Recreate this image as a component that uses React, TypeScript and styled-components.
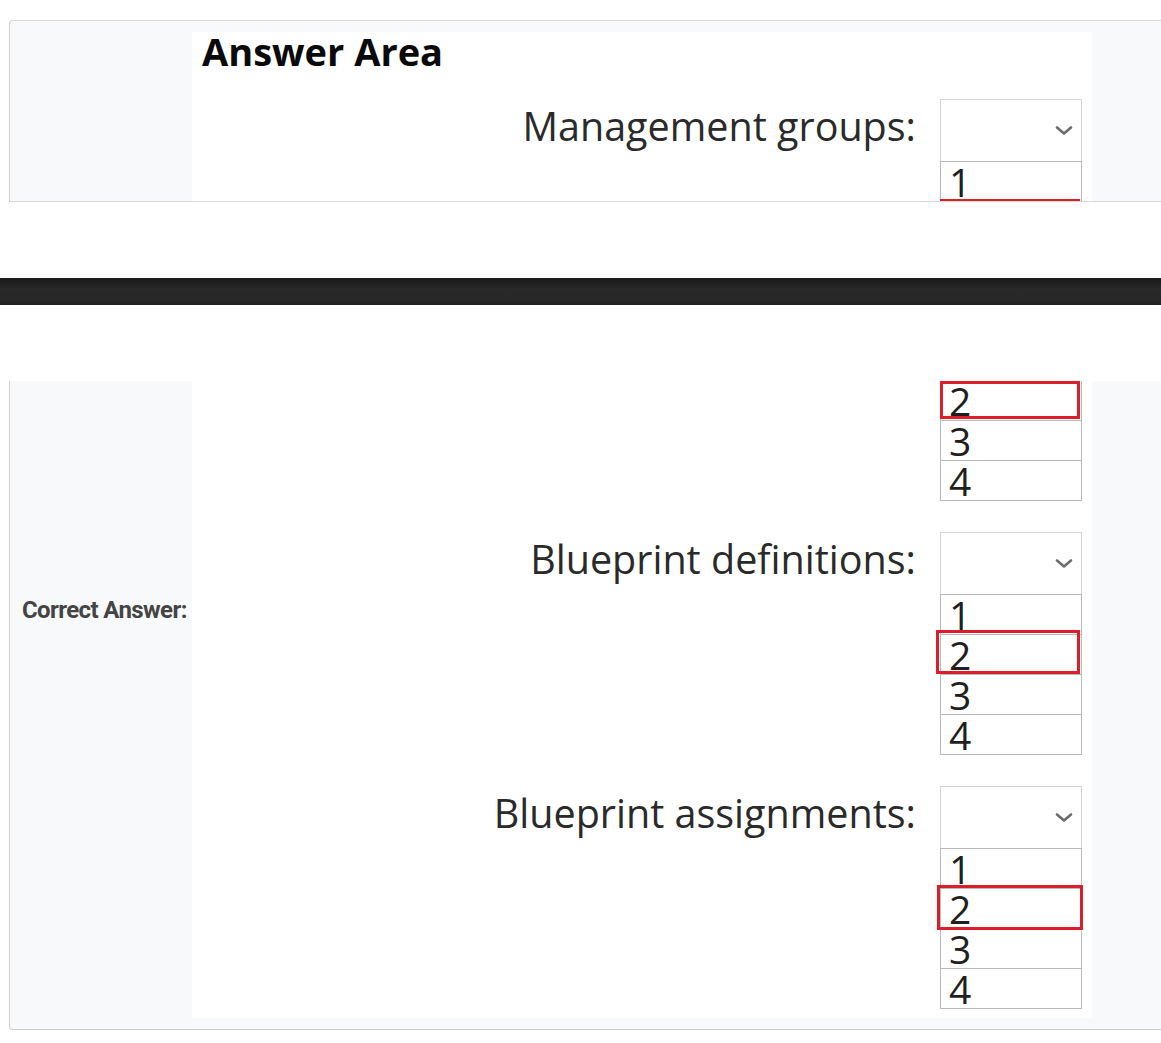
import React from "react";
import styled, { createGlobalStyle, css } from "styled-components";

const GlobalStyle = createGlobalStyle`
  html, body {
    margin: 0;
    padding: 0;
    background: #ffffff;
  }
  body {
    font-family: "Open Sans", "Liberation Sans", sans-serif;
    overflow-x: hidden;
  }
  * {
    box-sizing: border-box;
  }
`;

const Page = styled.main`
  display: flex;
  flex-direction: column;
  gap: 76px;
  padding-top: 20px;
`;

const Card = styled.section<{ $edge: "top" | "bottom" }>`
  display: flex;
  margin-left: 9px;
  background: #f8f9fa;
  border-left: 1px solid #cfcfcf;
  ${(p) =>
    p.$edge === "top"
      ? css`
          border-top: 1px solid #d8d8d8;
          border-bottom: 1px solid #d8d8d8;
          border-top-left-radius: 4px;
          padding-top: 11px;
        `
      : css`
          border-bottom: 1px solid #cdcdcd;
          border-bottom-left-radius: 4px;
          padding-bottom: 11px;
        `}
`;

const SideCell = styled.div<{ $top: number }>`
  width: 182px;
  flex: none;
  padding: ${(p) => p.$top}px 0 0 12px;
`;

const SideLabel = styled.div`
  font-family: Roboto, "Liberation Sans", sans-serif;
  font-weight: 700;
  font-size: 24px;
  line-height: 24px;
  letter-spacing: -0.6px;
  color: #444444;
  white-space: nowrap;
`;

const Panel = styled.div<{ $height: number }>`
  width: 900px;
  flex: none;
  height: ${(p) => p.$height}px;
  overflow: hidden;
  background: #ffffff;
  color: #262626;
`;

const Title = styled.h2`
  margin: 0 0 28px;
  padding-left: 10px;
  font-size: 38px;
  line-height: 39px;
  font-weight: 700;
  color: #0a0a0a;
  white-space: nowrap;
`;

const Questions = styled.div`
  display: flex;
  flex-direction: column;
  gap: 31px;
`;

const QuestionRow = styled.div`
  display: flex;
  justify-content: flex-end;
  align-items: flex-start;
  gap: 24px;
  padding-right: 10px;
`;

const Label = styled.div`
  font-size: 39.5px;
  line-height: 55px;
  color: #2a2a2a;
  white-space: nowrap;
`;

const Dropdown = styled.div`
  width: 142px;
  flex: none;
  display: flex;
  flex-direction: column;
`;

const SelectBox = styled.div`
  height: 62px;
  display: flex;
  align-items: center;
  justify-content: flex-end;
  padding-right: 8px;
  border: 1px solid #d6d6d6;
  border-bottom: none;
`;

const OptionList = styled.ul<{ $continued?: boolean }>`
  list-style: none;
  margin: 0;
  padding: 0;
  border: 1px solid #bababa;
  border-bottom: none;
  ${(p) =>
    p.$continued &&
    css`
      border-top: none;
    `}
`;

const Option = styled.li`
  position: relative;
  height: 40px;
  padding: 1px 0 0 8px;
  border-bottom: 1px solid #bababa;
  font-size: 39px;
  line-height: 38px;
  color: #1f1f1f;
`;

const Highlight = styled.span<{ $inset: string }>`
  position: absolute;
  inset: ${(p) => p.$inset};
  border: 3.5px solid #db1f2a;
  pointer-events: none;
`;

const DarkBar = styled.div`
  height: 27px;
  background: linear-gradient(#191919 0%, #292929 40%, #272727 80%, #202020 100%);
`;

const Chevron = () => (
  <svg width="18" height="11" viewBox="0 0 18 11" aria-hidden="true">
    <polyline
      points="2,2.5 9,8.5 16,2.5"
      fill="none"
      stroke="#6c6c6c"
      strokeWidth="2.6"
      strokeLinecap="round"
      strokeLinejoin="round"
    />
  </svg>
);

type Question = { label: string; selected: number; inset: string };

const laterQuestions: Question[] = [
  { label: "Blueprint definitions:", selected: 2, inset: "-5px 1px 0px -5px" },
  { label: "Blueprint assignments:", selected: 2, inset: "-4px -2px -2px -4px" },
];

const options = [1, 2, 3, 4];

const QuestionBlock = ({ q }: { q: Question }) => (
  <QuestionRow>
    <Label>{q.label}</Label>
    <Dropdown>
      <SelectBox>
        <Chevron />
      </SelectBox>
      <OptionList>
        {options.map((o) => (
          <Option key={o}>
            {o}
            {o === q.selected && <Highlight $inset={q.inset} />}
          </Option>
        ))}
      </OptionList>
    </Dropdown>
  </QuestionRow>
);

export default function App() {
  return (
    <>
      <GlobalStyle />
      <Page>
        <Card $edge="top">
          <SideCell $top={0} />
          <Panel $height={169}>
            <Title>Answer Area</Title>
            <QuestionRow>
              <Label>Management groups:</Label>
              <Dropdown>
                <SelectBox>
                  <Chevron />
                </SelectBox>
                <OptionList>
                  <Option>1</Option>
                  <Option aria-hidden="true">
                    <Highlight $inset="-3px 1px 1px -1px" />
                  </Option>
                </OptionList>
              </Dropdown>
            </QuestionRow>
          </Panel>
        </Card>
        <DarkBar />
        <Card $edge="bottom">
          <SideCell $top={217}>
            <SideLabel>Correct Answer:</SideLabel>
          </SideCell>
          <Panel $height={637}>
            <Questions>
              <QuestionRow>
                <Dropdown>
                  <OptionList $continued>
                    {[2, 3, 4].map((o) => (
                      <Option key={o}>
                        {o}
                        {o === 2 && <Highlight $inset="0px 1px 1px -1px" />}
                      </Option>
                    ))}
                  </OptionList>
                </Dropdown>
              </QuestionRow>
              {laterQuestions.map((q) => (
                <QuestionBlock key={q.label} q={q} />
              ))}
            </Questions>
          </Panel>
        </Card>
      </Page>
    </>
  );
}
